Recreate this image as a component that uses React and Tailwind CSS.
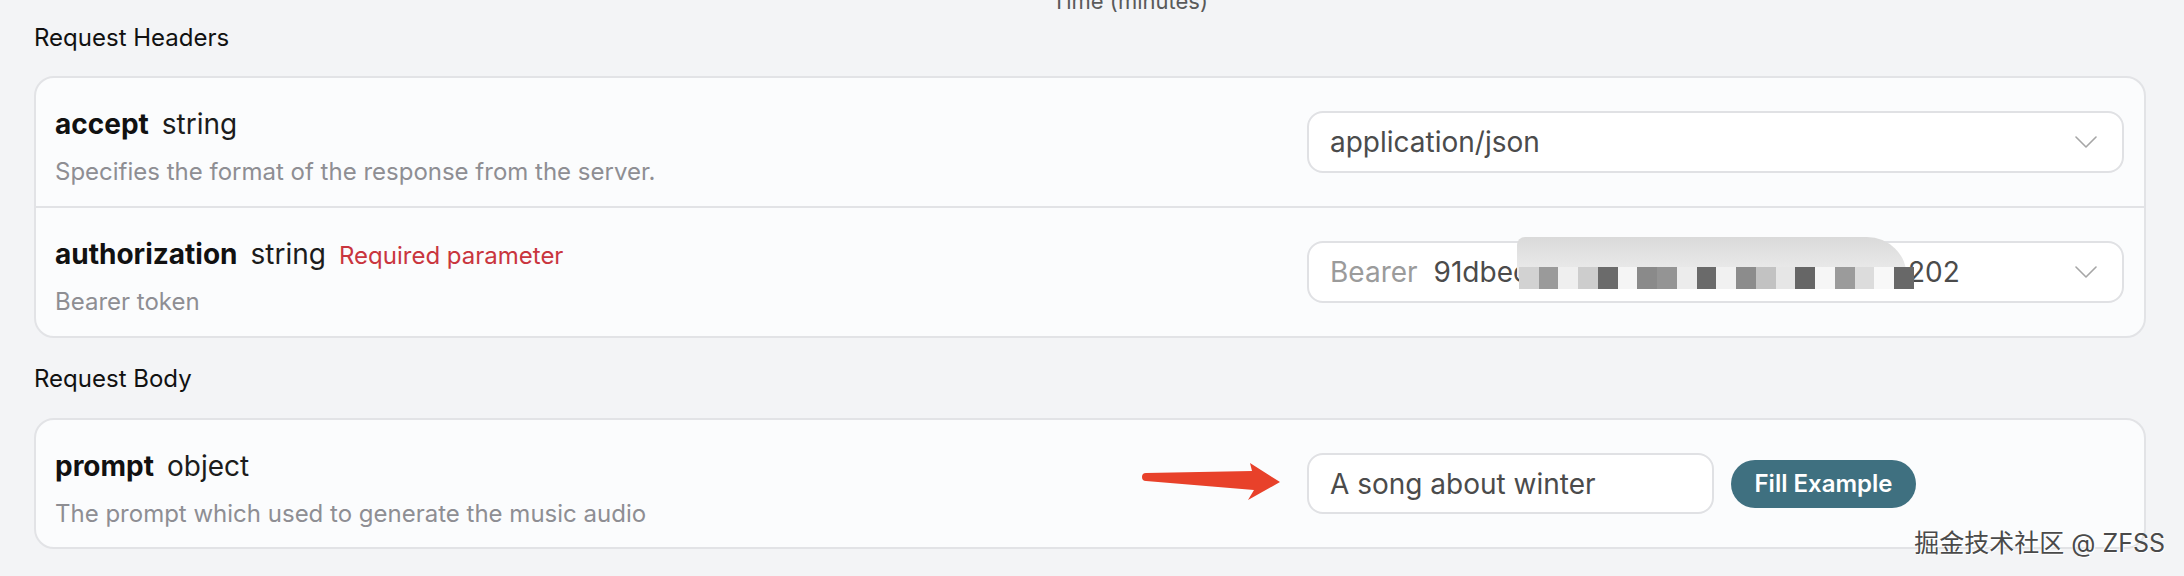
import React from "react";

const blocks = [
  "bg-[#d2d2d2]",
  "bg-[#9a9a9a]",
  "bg-[#efefef]",
  "bg-[#cdcdcd]",
  "bg-[#6b6b6b]",
  "bg-[#f5f5f5]",
  "bg-[#8a8a8a]",
  "bg-[#949494]",
  "bg-[#ececec]",
  "bg-[#6a6a6a]",
  "bg-[#f1f1f1]",
  "bg-[#8c8c8c]",
  "bg-[#c2c2c2]",
  "bg-[#e6e6e6]",
  "bg-[#666666]",
  "bg-[#f6f6f6]",
  "bg-[#9b9b9b]",
  "bg-[#dcdcdc]",
  "bg-[#f8f8f8]",
  "bg-[#686868]",
];

function Chevron() {
  return (
    <svg width="22" height="12" viewBox="0 0 22 12" fill="none">
      <path d="M1 1 L11 11 L21 1" stroke="#a6a6a6" strokeWidth="1.6" strokeLinecap="round" strokeLinejoin="round" />
    </svg>
  );
}

function Title({ name, type, required }) {
  return (
    <div className="flex h-[40px] items-baseline gap-[13px] leading-[40px]">
      <span className="text-[28px] font-bold text-[#111111]">{name}</span>
      <span className="text-[28px] text-[#1c1c1c]">{type}</span>
      {required && <span className="text-[24px] text-[#c9353e]">Required parameter</span>}
    </div>
  );
}

function TextBlock({ name, type, required, desc, pb }) {
  return (
    <div className={pb}>
      <div className="pt-[26px]">
        <Title name={name} type={type} required={required} />
      </div>
      <div className="mt-[12px] text-[24px] leading-[32px] text-[#8e8e93]">{desc}</div>
    </div>
  );
}

export default function App() {
  return (
    <div className="relative min-h-[576px] w-full overflow-hidden bg-[#f3f4f6] font-['Inter','Noto_Sans_CJK_SC',sans-serif]">
      <div className="flex h-[14px] justify-center overflow-hidden pl-[76px]">
        <span className="-mt-[10px] text-[22px] leading-none text-[#5a5a5a]">Time (minutes)</span>
      </div>

      <div className="pl-[34px] pr-[38px]">
        <h3 className="mt-[8px] text-[24px] leading-[32px] text-[#111111]">Request Headers</h3>

        <div className="mt-[22px] rounded-[20px] border-2 border-[#e2e3e6] bg-[#fbfcfd]">
          <div className="flex items-center justify-between pl-[19px] pr-[20px]">
            <TextBlock
              name="accept"
              type="string"
              desc="Specifies the format of the response from the server."
              pb="pb-[18px]"
            />
            <div className="flex h-[62px] w-[817px] items-center justify-between rounded-[16px] border-2 border-[#e0e1e4] bg-white pl-[21px] pr-[25px] text-[28px] text-[#4b4b4b]">
              <span>application/json</span>
              <Chevron />
            </div>
          </div>

          <div className="flex items-center justify-between border-t-2 border-[#e2e3e6] pl-[19px] pr-[20px]">
            <TextBlock name="authorization" type="string" required desc="Bearer token" pb="pb-[18px]" />
            <div className="flex h-[62px] w-[817px] items-center justify-between rounded-[16px] border-2 border-[#e0e1e4] bg-white pl-[21px] pr-[25px] text-[28px] text-[#4b4b4b]">
              <div className="flex items-center">
                <span className="text-[#9b9b9b]">Bearer</span>
                <span className="ml-[16px]">91dbec</span>
                <span className="relative top-[6px] -ml-[10px] flex h-[22px] w-[395px]">
                  <span className="absolute -top-[30px] left-[-2px] h-[40px] w-[390px] rounded-tl-[14px] rounded-tr-[70px] bg-linear-to-b from-[#dadada] to-[#ededed]" />
                  {blocks.map((c, i) => (
                    <span key={i} className={`relative h-[22px] w-[19.75px] ${c}`} />
                  ))}
                </span>
                <span className="-ml-[6px]">202</span>
              </div>
              <Chevron />
            </div>
          </div>
        </div>

        <h3 className="mt-[25px] text-[24px] leading-[32px] text-[#111111]">Request Body</h3>

        <div className="mt-[23px] rounded-[20px] border-2 border-[#e2e3e6] bg-[#fbfcfd]">
          <div className="flex items-center justify-between pl-[19px] pr-[20px]">
            <TextBlock
              name="prompt"
              type="object"
              desc="The prompt which used to generate the music audio"
              pb="pb-[17px]"
            />
            <div className="relative flex w-[817px] items-center gap-[17px]">
              <svg
                className="absolute right-[calc(100%+23px)] top-[5px]"
                width="145"
                height="47"
                viewBox="0 0 145 47"
              >
                <path d="M7 15 L113 13 L111 5 L141 24 L109 42 L115 32 L7 23 A4 4 0 0 1 7 15 Z" fill="#e8412a" />
              </svg>
              <div className="flex h-[61px] w-[407px] items-center rounded-[16px] border-2 border-[#e0e1e4] bg-white pl-[21px] text-[28px] text-[#4b4b4b]">
                A song about winter
              </div>
              <button className="flex h-[48px] w-[185px] items-center justify-center rounded-full bg-[#3f7080] text-[24px] font-semibold text-white">
                Fill Example
              </button>
            </div>
          </div>
        </div>
      </div>

      <div className="absolute right-[19px] top-[531px] text-[25px] leading-none text-[#4a4a4a] [text-shadow:1px_1px_0_#ffffff,-1px_-1px_0_rgba(255,255,255,0.7)]">
        掘金技术社区 @ ZFSS
      </div>
    </div>
  );
}
